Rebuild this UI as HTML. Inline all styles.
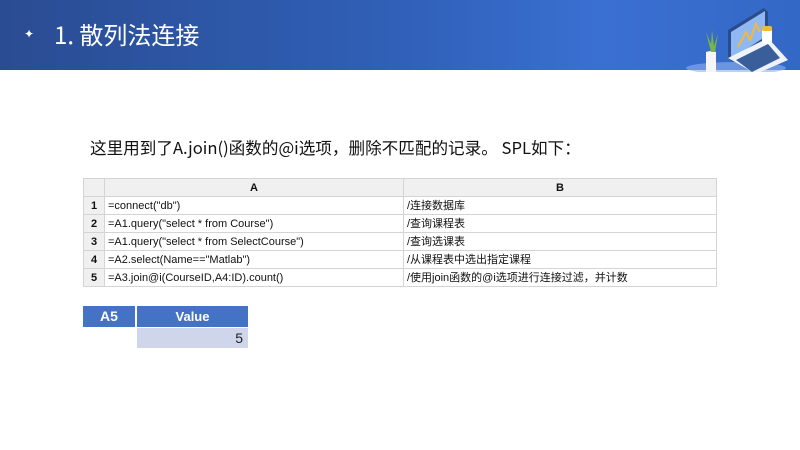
<!DOCTYPE html><html><head><meta charset="utf-8"><style>
body{margin:0;width:800px;height:450px;position:relative;background:#fff;font-family:"Liberation Sans","Noto Sans CJK SC",sans-serif;overflow:hidden}
.hd{position:absolute;left:0;top:0;width:800px;height:70px;background:linear-gradient(90deg,#2a4c92 0%,#3060b8 50%,#3a70d2 75%,#3468c6 100%)}
.s{position:absolute;left:24px;top:27px;color:#fff;font-size:12px}
.t{position:absolute;left:54px;top:17px;color:#fff;font-size:24px;font-family:"Noto Sans CJK SC",sans-serif;line-height:34px}
.p{position:absolute;left:90px;top:135px;font-size:16.6px;color:#111;font-family:"Noto Sans CJK SC",sans-serif}
table{position:absolute;border-collapse:collapse;font-size:11px;font-family:"Liberation Sans","Noto Sans CJK SC",sans-serif;color:#111}
td{border:1px solid #d4d4d4;height:17px;padding:0 3px;white-space:nowrap;line-height:16px}
.g{background:#f0f0f0;font-weight:bold;text-align:center}
</style></head><body>
<div class="hd"></div>
<div class="s">✦</div>
<div class="t">1. 散列法连接</div>
<svg style="position:absolute;left:676px;top:2px" width="120" height="70" viewBox="0 0 120 70">
<ellipse cx="60" cy="66" rx="50" ry="6" fill="#8fb0e8" opacity=".6"/>
<path d="M30 70 L30 50 Q36 48 40 50 L40 70Z" fill="#f5f5f5"/>
<path d="M35 50 L30 30 L35 42 L36 28 L38 44 L42 32 L39 50Z" fill="#7bb547"/>
<path d="M52 28 L88 6 L92 10 L92 36 L57 60 L52 56Z" fill="#2a4d8a"/>
<path d="M55 30 L89 9 L89 35 L55 57Z" fill="#8fb8f2"/>
<path d="M62 45 L70 30 L74 38 L80 22 L84 30" stroke="#f3b73c" stroke-width="2" fill="none"/>
<path d="M52 56 L92 36 L112 58 L80 72 Z" fill="#eef2fb"/>
<path d="M60 58 L92 42 L104 56 L76 70Z" fill="#3a5e9a"/>
<rect x="86" y="26" width="10" height="16" rx="3" fill="#fff"/><rect x="86" y="24" width="10" height="5" rx="2" fill="#f3b73c"/>
</svg>
<div class="p">这里用到了A.join()函数的@i选项，删除不匹配的记录。 SPL如下：</div>
<table style="left:83px;top:178px;width:634px">
<tr><td class="g" style="width:14px"></td><td class="g" style="width:292px">A</td><td class="g">B</td></tr>
<tr><td class="g">1</td><td>=connect("db")</td><td>/连接数据库</td></tr>
<tr><td class="g">2</td><td>=A1.query("select * from Course")</td><td>/查询课程表</td></tr>
<tr><td class="g">3</td><td>=A1.query("select * from SelectCourse")</td><td>/查询选课表</td></tr>
<tr><td class="g">4</td><td>=A2.select(Name=="Matlab")</td><td>/从课程表中选出指定课程</td></tr>
<tr><td class="g">5</td><td>=A3.join@i(CourseID,A4:ID).count()</td><td>/使用join函数的@i选项进行连接过滤，并计数</td></tr>
</table>
<div style="position:absolute;left:83px;top:306px;width:52px;height:21px;background:#4472c4;color:#fff;font-weight:bold;font-size:14px;text-align:center;line-height:21px">A5</div>
<div style="position:absolute;left:137px;top:306px;width:111px;height:21px;background:#4472c4;color:#fff;font-weight:bold;font-size:13px;text-align:center;line-height:21px">Value</div>
<div style="position:absolute;left:137px;top:328px;width:106px;height:20px;background:#cfd5ea;color:#222;font-size:14px;text-align:right;padding-right:5px;line-height:20px">5</div>
</body></html>
